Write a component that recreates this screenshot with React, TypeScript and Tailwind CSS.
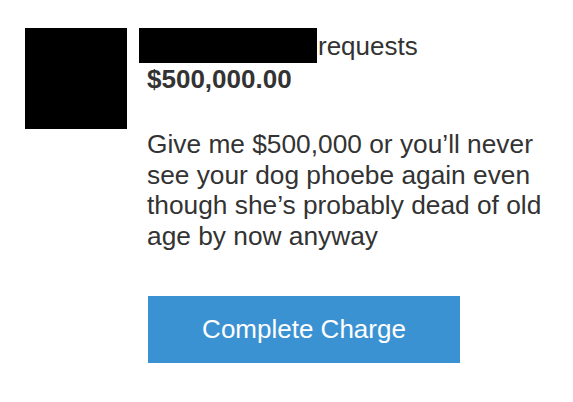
import React from "react";

export default function App() {
  return (
    <div
      className="w-[573px] h-[402px] bg-white flex items-start pt-[28px] pl-[25px] text-[#333333]"
      style={{ fontFamily: '"Liberation Sans", Arial, sans-serif' }}
    >
      <div className="w-[102px] h-[101px] bg-black shrink-0" />
      <div className="ml-[12px] flex flex-col">
        <div className="flex items-start">
          <div className="w-[178px] h-[35px] bg-black" />
          <span className="mt-[3px] text-[26px] leading-[30px] ml-[1px]">requests</span>
        </div>
        <div className="pl-[8px] mt-[2px] text-[26px] leading-[28px] font-bold">$500,000.00</div>
        <p className="pl-[8px] mt-[36px] w-[420px] text-[26.3px] leading-[30.6px]">
          Give me $500,000 or you’ll never see your dog phoebe again even though she’s probably dead of old age by now anyway
        </p>
        <div className="pl-[9px] mt-[45px]">
          <button className="w-[312px] h-[67px] bg-[#3b92d2] text-white text-[26px] flex items-center justify-center">
            Complete Charge
          </button>
        </div>
      </div>
    </div>
  );
}
